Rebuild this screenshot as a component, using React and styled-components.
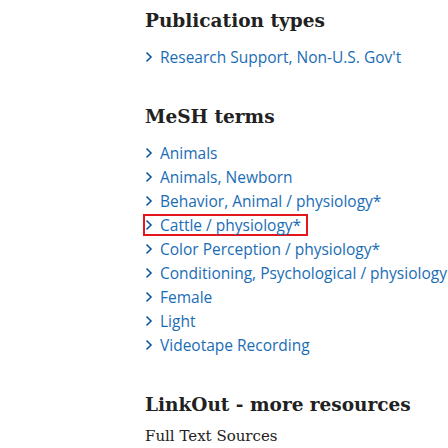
import React from "react";
import styled, { createGlobalStyle } from "styled-components";

const Global = createGlobalStyle`
  html, body { margin: 0; padding: 0; background: #fff; }
  body { width: 448px; height: 448px; overflow: hidden; }
`;

const Page = styled.div`
  padding: 5px 0 0 145px;
  width: 448px;
  box-sizing: border-box;
`;

const Section = styled.section`
  margin-bottom: ${(p) => p.$gap || 0}px;
`;

const Heading = styled.h2`
  margin: 0 0 8px 0;
  font-family: "DejaVu Serif", "Liberation Serif", serif;
  font-weight: 700;
  font-size: 18.5px;
  line-height: 32px;
  color: #212121;
`;

const SubHeading = styled.h3`
  margin: -3px 0 0 0;
  font-family: "DejaVu Serif", "Liberation Serif", serif;
  font-weight: 400;
  font-size: 15px;
  line-height: 20px;
  color: #212121;
`;

const List = styled.ul`
  list-style: none;
  margin: 0;
  padding: 0;
`;

const Item = styled.li`
  display: flex;
  align-items: center;
  height: 24px;
  white-space: nowrap;
`;

const Term = styled.a`
  display: inline-flex;
  align-items: center;
  height: 22px;
  margin-left: -2px;
  padding: 0 5px 0 0;
  border: 2px solid ${(p) => (p.$marked ? "#e3161b" : "transparent")};
  font-family: "Open Sans", "Noto Sans", sans-serif;
  font-size: 15.5px;
  color: #1a6db5;
  text-decoration: none;
  box-sizing: border-box;
`;

const Chevron = styled.svg`
  width: 15px;
  height: 12px;
  flex: none;
`;

const Arrow = () => (
  <Chevron viewBox="0 0 15 12">
    <path d="M1.5 1.5 L6 6 L1.5 10.5" fill="none" stroke="#0a5aa3" strokeWidth="1.6" />
  </Chevron>
);

const pubTypes = ["Research Support, Non-U.S. Gov't"];
const mesh = [
  "Animals",
  "Animals, Newborn",
  "Behavior, Animal / physiology*",
  "Cattle / physiology*",
  "Color Perception / physiology*",
  "Conditioning, Psychological / physiology",
  "Female",
  "Light",
  "Videotape Recording",
];

export default function App() {
  return (
    <>
      <Global />
      <Page>
        <Section $gap={32}>
          <Heading>Publication types</Heading>
          <List>
            {pubTypes.map((t) => (
              <Item key={t}>
                <Term href="#">
                  <Arrow />
                  {t}
                </Term>
              </Item>
            ))}
          </List>
        </Section>
        <Section $gap={32}>
          <Heading>MeSH terms</Heading>
          <List>
            {mesh.map((t) => (
              <Item key={t}>
                <Term href="#" $marked={t.startsWith("Cattle")}>
                  <Arrow />
                  {t}
                </Term>
              </Item>
            ))}
          </List>
        </Section>
        <Section>
          <Heading>LinkOut - more resources</Heading>
          <SubHeading>Full Text Sources</SubHeading>
        </Section>
      </Page>
    </>
  );
}
